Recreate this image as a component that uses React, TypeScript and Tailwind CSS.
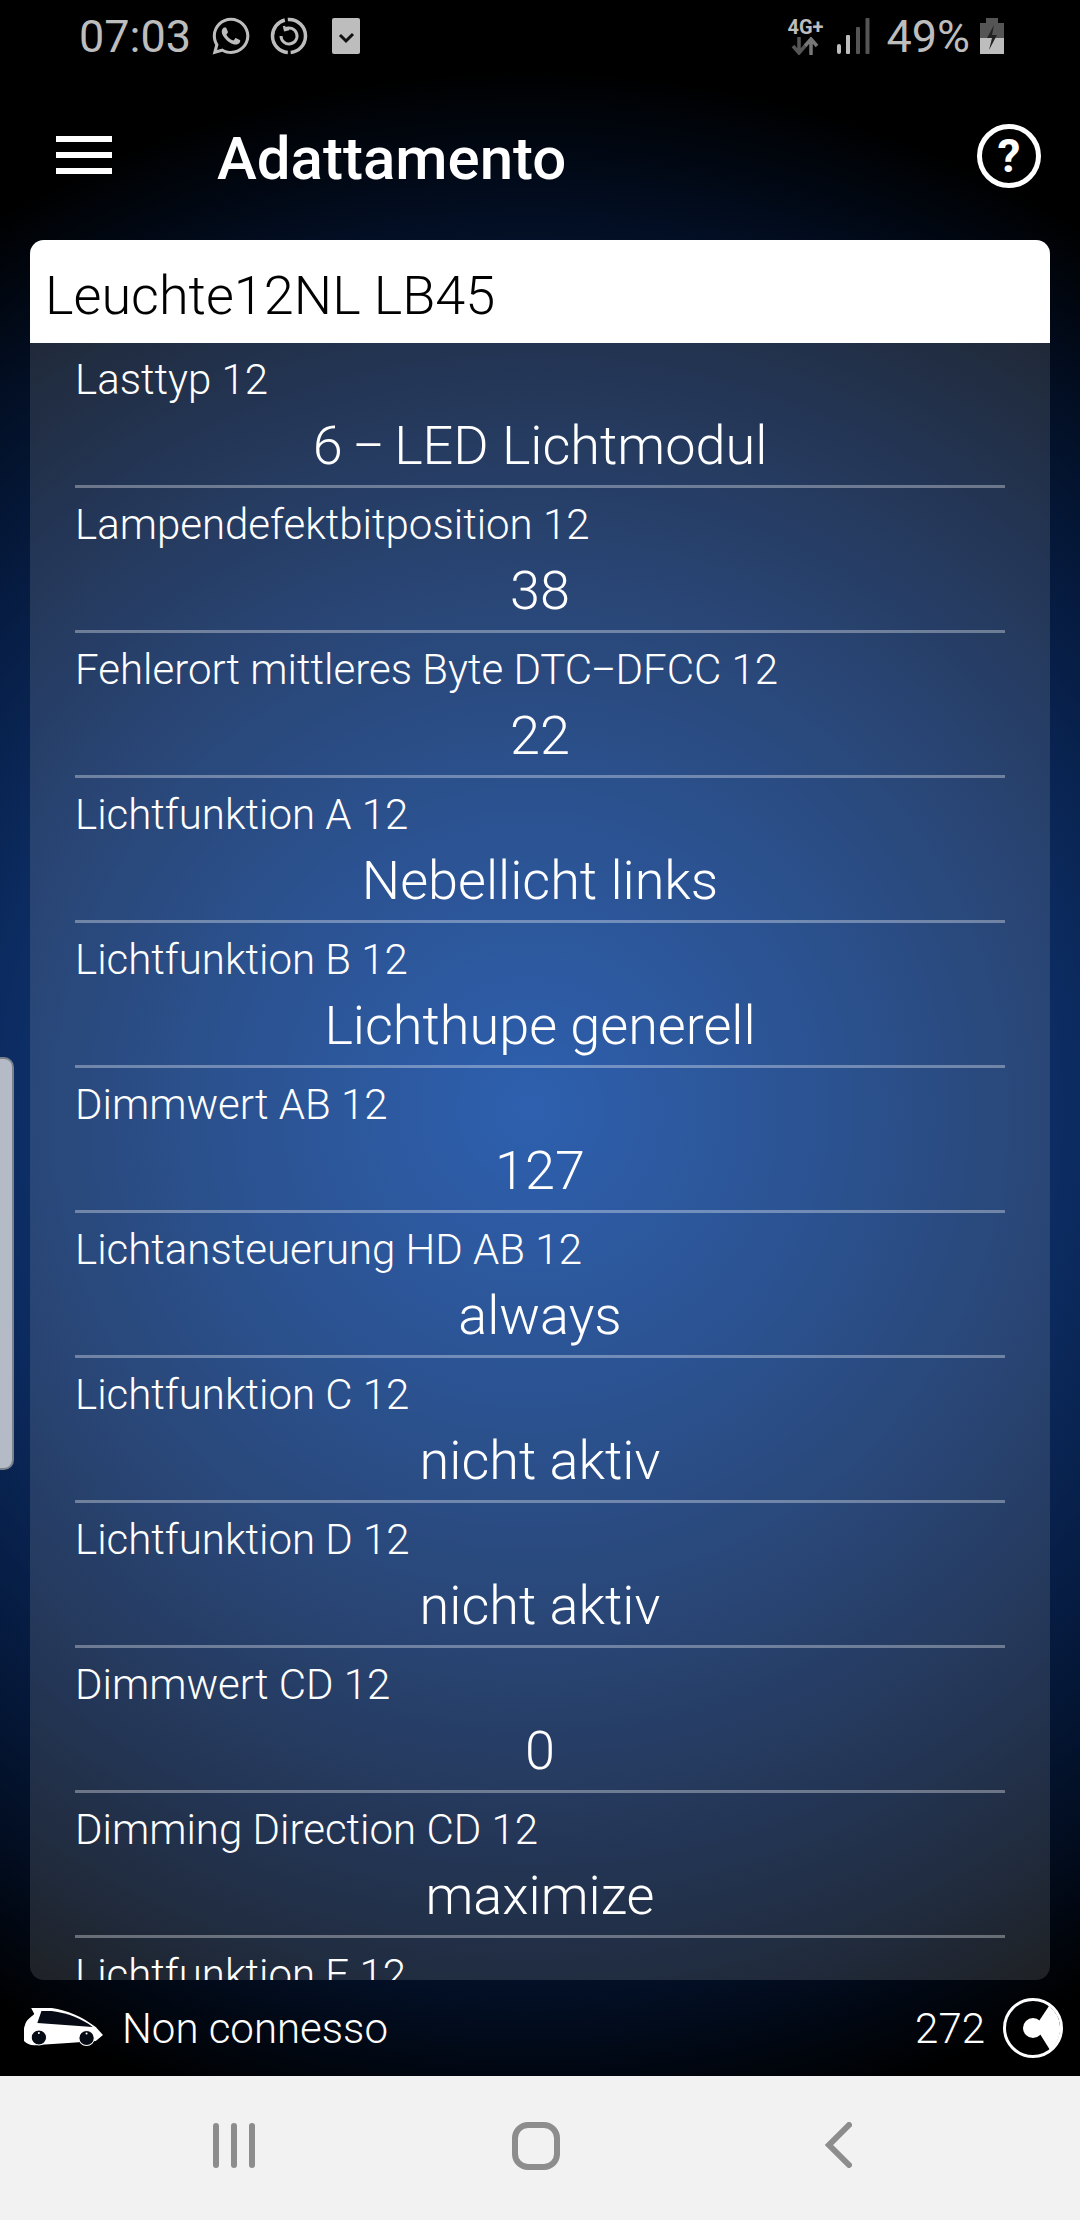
import { FaWhatsapp } from "react-icons/fa";

const rows = [
  ["Lasttyp 12", "6 – LED Lichtmodul"],
  ["Lampendefektbitposition 12", "38"],
  ["Fehlerort mittleres Byte DTC–DFCC 12", "22"],
  ["Lichtfunktion A 12", "Nebellicht links"],
  ["Lichtfunktion B 12", "Lichthupe generell"],
  ["Dimmwert AB 12", "127"],
  ["Lichtansteuerung HD AB 12", "always"],
  ["Lichtfunktion C 12", "nicht aktiv"],
  ["Lichtfunktion D 12", "nicht aktiv"],
  ["Dimmwert CD 12", "0"],
  ["Dimming Direction CD 12", "maximize"],
  ["Lichtfunktion E 12", ""],
];

function Dashed({ text, dash }: { text: string; dash: string }) {
  const parts = text.split("–");
  if (parts.length < 2) return <>{text}</>;
  return (
    <>
      {parts[0]}
      <span className={dash}>–</span>
      {parts[1]}
    </>
  );
}

function Row({ label, value }: { label: string; value: string }) {
  return (
    <div className="mx-[45px] shrink-0 h-[145px] border-b-[3px] border-[#ffffff55] flex flex-col">
      <div className="mt-[12px] text-[42px] leading-[49px] font-light text-white whitespace-nowrap">
        <Dashed text={label} dash="inline-block scale-x-[0.9] -mx-[2px]" />
      </div>
      <div className="mt-[9px] text-[54px] leading-[66px] font-light text-white text-center">
        <Dashed text={value} dash="inline-block scale-x-[0.9] -mx-[5px]" />
      </div>
    </div>
  );
}

export default function App() {
  return (
    <div className="relative w-[1080px] h-[2220px] flex flex-col overflow-hidden font-['Roboto',sans-serif]">
      <div className="h-[2076px] flex flex-col bg-[radial-gradient(circle_1040px_at_530px_1110px,#114aa4_0%,#0e3a80_30%,#0c2c62_51%,#05193c_73%,#020d20_87%,#000000_100%)]">
        <div className="h-[60px] flex items-center pl-[79px] pr-[76px] text-[#bdbdbd] text-[45px] mt-[6px]">
          <span className="leading-none">07:03</span>
          <FaWhatsapp className="ml-[19px] w-[42px] h-[42px]" />
          <svg className="ml-[18px] w-[38px] h-[38px]" viewBox="0 0 38 38" fill="none" stroke="#bdbdbd">
            <circle cx="19" cy="19" r="16.5" strokeWidth="3.5" strokeDasharray="24 3 46 3 28 0" />
            <path d="M11 19a8 8 0 1 0 4-7" strokeWidth="3" />
            <path d="M14 9l1 4 4-1" strokeWidth="2.5" />
          </svg>
          <svg className="ml-[24px] w-[28px] h-[36px]" viewBox="0 0 28 36">
            <rect width="28" height="36" rx="2" fill="#bdbdbd" />
            <path d="M8 17l6 6 7-7" fill="none" stroke="#111" strokeWidth="3" />
          </svg>
          <div className="ml-auto flex flex-col items-center w-[36px] mr-[14px]">
            <span className="text-[20px] leading-[20px] font-bold">4G+</span>
            <svg className="w-[28px] h-[18px]" viewBox="0 0 28 18">
              <path d="M8 0v14M2 9l6 7 6-7" fill="none" stroke="#555" strokeWidth="3.5" />
              <path d="M20 18V4M14 9l6-7 6 7" fill="none" stroke="#777" strokeWidth="3.5" />
            </svg>
          </div>
          <svg className="w-[33px] h-[36px]" viewBox="0 0 33 36">
            <rect x="0" y="26" width="4" height="10" rx="2" fill="#bdbdbd" />
            <rect x="9" y="17" width="4" height="19" rx="1" fill="#bdbdbd" />
            <rect x="19" y="9" width="4" height="27" rx="1" fill="#555" />
            <rect x="28.500" y="0" width="4" height="36" rx="1" fill="#555" />
          </svg>
          <span className="ml-[16px] leading-none text-[45px]">49%</span>
          <svg className="ml-[10px] w-[24px] h-[36px]" viewBox="0 0 24 36">
            <path d="M6 0h12v5h6v15H0V5h6z" fill="#555" />
            <path d="M0 20h24v16H0z" fill="#bdbdbd" />
            <path d="M14 7l-7 13h5l-3 12 8-15h-5z" fill="#222" />
          </svg>
        </div>
        <div className="h-[174px] flex items-center pl-[56px] pr-[39px] pt-[4px]">
          <div className="w-[56px] flex flex-col gap-[10px]">
            <div className="h-[6px] bg-white" />
            <div className="h-[6px] bg-white" />
            <div className="h-[6px] bg-white" />
          </div>
          <div className="ml-[105px] mt-[8px] text-[60px] leading-none font-medium text-white">Adattamento</div>
          <svg className="ml-auto mt-[2px] w-[64px] h-[64px]" viewBox="0 0 64 64">
            <circle cx="32" cy="32" r="29.500" fill="none" stroke="white" strokeWidth="5" />
            <text x="32" y="48" textAnchor="middle" fontSize="46" fontWeight="700" fill="white" fontFamily="Roboto">?</text>
          </svg>
        </div>
        <div className="mx-[30px] h-[1740px] rounded-[14px] bg-[#ffffff1f] overflow-hidden flex flex-col">
          <div className="h-[103px] shrink-0 bg-white flex items-center pl-[15px] pt-[7px] text-[54px] font-light text-black">
            Leuchte12NL LB45
          </div>
          <div className="flex-1 min-h-0 overflow-hidden flex flex-col">
            {rows.map((r, i) => (
              <Row key={i} label={r[0]} value={r[1]} />
            ))}
          </div>
        </div>
        <div className="flex-1 flex items-center pl-[24px] pr-[17px]">
          <svg className="w-[80px] h-[40px]" viewBox="0 0 78 40" preserveAspectRatio="none">
            <path d="M7 0h20c15 2 30 9 43 19l7 8-7 6-27 2-30 2c-6 1-10-1-13-4C-1 28-1 22 1 17c1-5 6-8 9-11z" fill="white" />
            <path d="M17 3L13 15l54 4C57 11 43 5 27 3z" fill="#050a14" />
            <circle cx="14.500" cy="29.500" r="7.500" fill="#050a14" stroke="white" strokeWidth="1" />
            <circle cx="61" cy="30" r="7.500" fill="#050a14" stroke="white" strokeWidth="1" />
            <circle cx="14.500" cy="25" r="1" fill="white" />
            <circle cx="61" cy="25.500" r="1" fill="white" />
          </svg>
          <span className="ml-[18px] text-[42px] font-light text-white">Non connesso</span>
          <span className="ml-auto text-[42px] font-light text-white">272</span>
          <svg className="ml-[18px] w-[60px] h-[60px]" viewBox="0 0 60 60">
            <circle cx="30" cy="30" r="28.500" fill="none" stroke="white" strokeWidth="3" />
            <circle cx="30" cy="30" r="10" fill="white" />
            <path d="M46 8A28 28 0 0 1 47 52L37 36 34 26z" fill="white" />
          </svg>
        </div>
      </div>
      <div className="flex-1 bg-[#f2f2f2] relative">
        <div className="absolute left-[213px] top-[47px] flex gap-[12px]">
          <div className="w-[6px] h-[45px] rounded-full bg-[#8d8d8d]" />
          <div className="w-[6px] h-[45px] rounded-full bg-[#8d8d8d]" />
          <div className="w-[6px] h-[45px] rounded-full bg-[#8d8d8d]" />
        </div>
        <div className="absolute left-[512px] top-[46px] w-[48px] h-[48px] rounded-[16px] border-[6px] border-[#8d8d8d]" />
        <svg className="absolute left-[824px] top-[46px] w-[28px] h-[46px]" viewBox="0 0 28 46">
          <path d="M25 3L5 23l20 20" fill="none" stroke="#8d8d8d" strokeWidth="6" strokeLinecap="round" />
        </svg>
      </div>
      <div className="absolute left-0 top-[1057px] w-[14px] h-[413px] rounded-r-[10px] bg-[#b4bac6] border-r-[2px] border-y-[2px] border-[#7a808c]" />
    </div>
  );
}
